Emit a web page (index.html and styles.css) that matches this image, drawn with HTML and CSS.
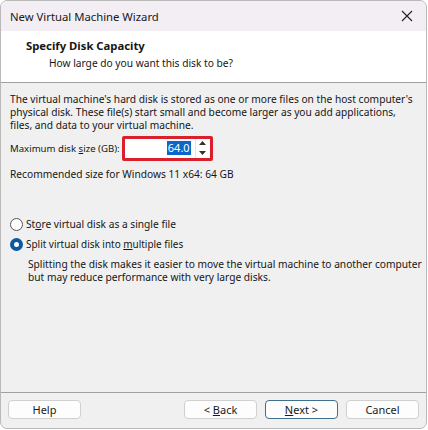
FILE: index.html
```html
<!DOCTYPE html>
<html>
<head>
<meta charset="utf-8">
<link rel="stylesheet" href="styles.css">
</head>
<body>
<div class="window">
  <div class="titlebar">
    <span class="title">New Virtual Machine Wizard</span>
    <svg class="close" width="12" height="12" viewBox="0 0 12 12"><path d="M1 1L11 11M11 1L1 11" stroke="#222" stroke-width="1.1" fill="none"/></svg>
  </div>
  <div class="header">
    <div class="h-title">Specify Disk Capacity</div>
    <div class="h-sub">How large do you want this disk to be?</div>
  </div>
  <div class="body">
    <p class="intro">The virtual machine's hard disk is stored as one or more files on the host computer's<br>physical disk. These file(s) start small and become larger as you add applications,<br>files, and data to your virtual machine.</p>
    <div class="size-row">
      <span class="label">Maximum disk <u>s</u>ize (GB):</span>
      <div class="highlight">
        <div class="spin">
          <div class="spin-field"><span class="sel">64.0</span></div>
          <div class="spin-btns">
            <svg width="9" height="6" viewBox="0 0 9 6"><path d="M4.5 1L8 5H1Z" fill="#333"/></svg>
            <svg width="9" height="6" viewBox="0 0 9 6"><path d="M4.5 5L8 1H1Z" fill="#333"/></svg>
          </div>
        </div>
      </div>
    </div>
    <p class="rec">Recommended size for Windows 11 x64: 64 GB</p>
    <div class="options">
      <label class="radio"><span class="circle"></span><span>St<u>o</u>re virtual disk as a single file</span></label>
      <label class="radio"><span class="circle on"></span><span class="narrow">Split virtual disk into <u>m</u>ultiple files</span></label>
      <p class="desc">Splitting the disk makes it easier to move the virtual machine to another computer<br>but may reduce performance with very large disks.</p>
    </div>
  </div>
  <div class="footer">
    <button class="btn">Help</button>
    <div class="spacer"></div>
    <button class="btn">&lt; <u>B</u>ack</button>
    <button class="btn default"><u>N</u>ext &gt;</button>
    <button class="btn">Cancel</button>
  </div>
</div>
</body>
</html>
```
FILE: styles.css
```css
html, body {
  margin: 0;
  padding: 0;
  background: #ffffff;
}
body {
  font-family: "Noto Sans", "Open Sans", sans-serif;
  font-size: 10.2px;
  color: #161616;
}
.window {
  width: 427px;
  height: 429px;
  border: 1px solid #b9b9b9;
  border-radius: 7px;
  overflow: hidden;
  background: #f0f0f0;
  display: flex;
  flex-direction: column;
  box-sizing: border-box;
}
.titlebar {
  height: 30px;
  flex: none;
  background: #f3edf4;
  display: flex;
  align-items: center;
  padding: 0 11px 0 9px;
}
.title {
  flex: 1;
  font-size: 11.3px;
  color: #1a1a1a;
}
.close {
  margin-right: 2px;
}
.header {
  height: 52px;
  flex: none;
  background: #ffffff;
  border-bottom: 1px solid #a0a0a0;
  box-sizing: border-box;
  padding: 7px 0 0 25px;
}
.h-title {
  font-weight: bold;
  font-size: 11.3px;
  line-height: 16px;
}
.h-sub {
  padding-left: 23px;
  line-height: 17px;
  margin-top: 1px;
}
.body {
  flex: 1;
  padding: 10px 2px 0 9px;
  border-bottom: 1px solid #a0a0a0;
}
p {
  margin: 0;
}
.intro {
  font-size: 10.2px;
  line-height: 13px;
  white-space: nowrap;
}
.size-row {
  display: flex;
  align-items: center;
  margin-top: 3px;
  height: 26px;
}
.label {
  font-size: 9.6px;
}
.highlight {
  border: 3px solid #d9202c;
  border-radius: 2px;
  padding: 0;
  margin-left: 2px;
}
.spin {
  display: flex;
  width: 85px;
  height: 19px;
  background: #fff;
}
.spin-field {
  flex: 1;
  display: flex;
  justify-content: flex-end;
  align-items: center;
  padding-right: 4px;
}
.sel {
  background: #0a67c9;
  color: #fff;
  line-height: 14px;
  padding: 0 1px;
  font-size: 11px;
}
.spin-btns {
  width: 14px;
  display: flex;
  flex-direction: column;
  align-items: center;
  justify-content: space-around;
  border-left: 1px solid #e4e4e4;
}
.rec {
  margin-top: 6px;
  line-height: 15px;
  font-size: 10.2px;
}
.options {
  margin-top: 35px;
  display: flex;
  flex-direction: column;
  gap: 5px;
}
.radio {
  display: flex;
  align-items: center;
  gap: 3px;
  line-height: 15px;
}
.narrow {
  font-size: 9.95px;
}
.circle {
  width: 11px;
  height: 11px;
  border: 1px solid #555;
  border-radius: 50%;
  background: #fff;
  box-sizing: content-box;
}
.circle.on {
  width: 5px;
  height: 5px;
  border: 4px solid #0b5aa0;
  background: #fff;
}
.desc {
  padding-left: 18px;
  line-height: 13px;
  margin-top: 1px;
  white-space: nowrap;
  font-size: 10.2px;
}
.footer {
  flex: none;
  height: 33px;
  display: flex;
  align-items: center;
  padding: 0 7px 2px 7px;
  gap: 8px;
}
.spacer {
  flex: 1;
}
.btn {
  width: 73px;
  height: 19px;
  font-family: inherit;
  font-size: 11px;
  color: #1a1a1a;
  background: #fdfdfd;
  border: 1px solid #d0d0d0;
  border-radius: 4px;
  padding: 0;
}
.btn.default {
  border: 1px solid #3f6f8f;
}
```
